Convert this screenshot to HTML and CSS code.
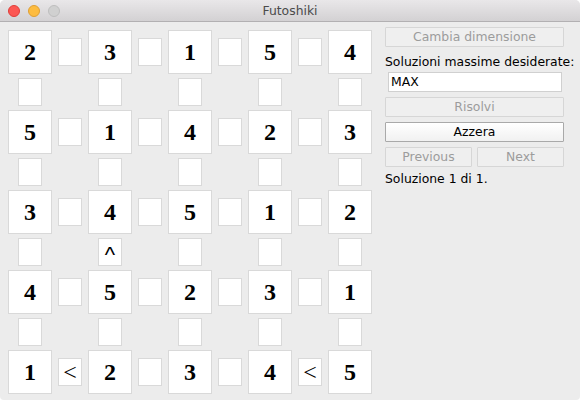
FILE: index.html
```html
<!DOCTYPE html>
<html lang="it">
<head>
<meta charset="utf-8">
<title>Futoshiki</title>
<link rel="stylesheet" href="styles.css">
</head>
<body>
<div class="window">
  <div class="titlebar">
    <div class="lights">
      <span class="light red"></span>
      <span class="light yellow"></span>
      <span class="light gray"></span>
    </div>
    <div class="title">Futoshiki</div>
    <div></div>
  </div>
  <div class="content">
    <div class="board">
      <div class="num">2</div><div class="h"></div><div class="num">3</div><div class="h"></div><div class="num">1</div><div class="h"></div><div class="num">5</div><div class="h"></div><div class="num">4</div>
      <div class="v"></div><div></div><div class="v"></div><div></div><div class="v"></div><div></div><div class="v"></div><div></div><div class="v"></div>
      <div class="num">5</div><div class="h"></div><div class="num">1</div><div class="h"></div><div class="num">4</div><div class="h"></div><div class="num">2</div><div class="h"></div><div class="num">3</div>
      <div class="v"></div><div></div><div class="v"></div><div></div><div class="v"></div><div></div><div class="v"></div><div></div><div class="v"></div>
      <div class="num">3</div><div class="h"></div><div class="num">4</div><div class="h"></div><div class="num">5</div><div class="h"></div><div class="num">1</div><div class="h"></div><div class="num">2</div>
      <div class="v"></div><div></div><div class="v caret">^</div><div></div><div class="v"></div><div></div><div class="v"></div><div></div><div class="v"></div>
      <div class="num">4</div><div class="h"></div><div class="num">5</div><div class="h"></div><div class="num">2</div><div class="h"></div><div class="num">3</div><div class="h"></div><div class="num">1</div>
      <div class="v"></div><div></div><div class="v"></div><div></div><div class="v"></div><div></div><div class="v"></div><div></div><div class="v"></div>
      <div class="num">1</div><div class="h">&lt;</div><div class="num">2</div><div class="h"></div><div class="num">3</div><div class="h"></div><div class="num">4</div><div class="h">&lt;</div><div class="num">5</div>
    </div>
    <div class="panel">
      <div class="btn disabled">Cambia dimensione</div>
      <div class="label">Soluzioni massime desiderate:</div>
      <div class="field">MAX</div>
      <div class="btn disabled gap">Risolvi</div>
      <div class="btn gap">Azzera</div>
      <div class="pair gap">
        <div class="btn disabled">Previous</div>
        <div class="btn disabled">Next</div>
      </div>
      <div class="status">Soluzione 1 di 1.</div>
    </div>
  </div>
</div>
</body>
</html>
```

FILE: styles.css
```css
* { box-sizing: border-box; }
html, body { margin: 0; padding: 0; background: #ffffff; }
.window {
  width: 580px;
  height: 400px;
  background: #ececec;
  border-radius: 5px 5px 4px 4px;
  overflow: hidden;
}
.titlebar {
  height: 22px;
  background: linear-gradient(#e9e7e9, #d3d1d3);
  border-bottom: 1px solid #b2b0b2;
  display: grid;
  grid-template-columns: 1fr auto 1fr;
  align-items: center;
}
.lights {
  display: flex;
  gap: 8px;
  padding-left: 8px;
  padding-top: 1px;
}
.light {
  width: 12px;
  height: 12px;
  border-radius: 50%;
  display: block;
}
.red { background: #fc5753; border: 1px solid #df3d39; }
.yellow { background: #fdbc40; border: 1px solid #de9f34; }
.gray { background: #d0d0d0; border: 1px solid #bdbdbd; }
.title {
  font-family: "DejaVu Sans", sans-serif;
  font-size: 12.4px;
  color: #4b4b4b;
}
.content {
  display: flex;
  align-items: flex-start;
  gap: 13px;
  padding-left: 8px;
}
.board {
  margin-top: 8px;
  display: grid;
  grid-template-columns: 44px 24px 44px 24px 44px 24px 44px 24px 44px;
  grid-template-rows: 44px 28px 44px 28px 44px 28px 44px 28px 44px;
  column-gap: 6px;
  row-gap: 4px;
}
.num {
  width: 44px;
  height: 44px;
  background: #ffffff;
  border: 1px solid #d9d9d9;
  font-family: "Liberation Serif", serif;
  font-weight: bold;
  font-size: 24px;
  line-height: 42px;
  text-align: center;
  color: #000;
}
.h, .v {
  width: 24px;
  height: 28px;
  background: #ffffff;
  border: 1px solid #d9d9d9;
  font-family: "Liberation Serif", serif;
  font-size: 24px;
  line-height: 26px;
  text-align: center;
  color: #000;
  align-self: center;
  justify-self: center;
}
.caret {
  font-family: "Liberation Sans", sans-serif;
  font-size: 22px;
  line-height: 32px;
  overflow: hidden;
}
.panel {
  width: 179px;
  padding-top: 5px;
  display: flex;
  flex-direction: column;
  font-family: "DejaVu Sans", sans-serif;
  font-size: 12.4px;
  color: #000;
}
.btn {
  height: 20px;
  line-height: 18px;
  text-align: center;
  border: 1px solid #a9a9a9;
  background: linear-gradient(#ffffff, #f1f1f1);
  border-radius: 1px;
  color: #000;
}
.btn.disabled {
  border-color: #d6d6d6;
  background: #efefef;
  color: #9c9c9c;
}
.gap { margin-top: 5px; }
.label {
  margin-top: 7px;
  line-height: 16px;
  white-space: nowrap;
}
.field {
  margin: 2px 2px 0 3px;
  height: 20px;
  line-height: 18px;
  background: #ffffff;
  border: 1px solid #d0d0d0;
  padding-left: 2px;
}
.pair {
  display: flex;
  gap: 5px;
}
.pair .btn { flex: 1; }
.status {
  margin-top: 4px;
  line-height: 16px;
}
```
